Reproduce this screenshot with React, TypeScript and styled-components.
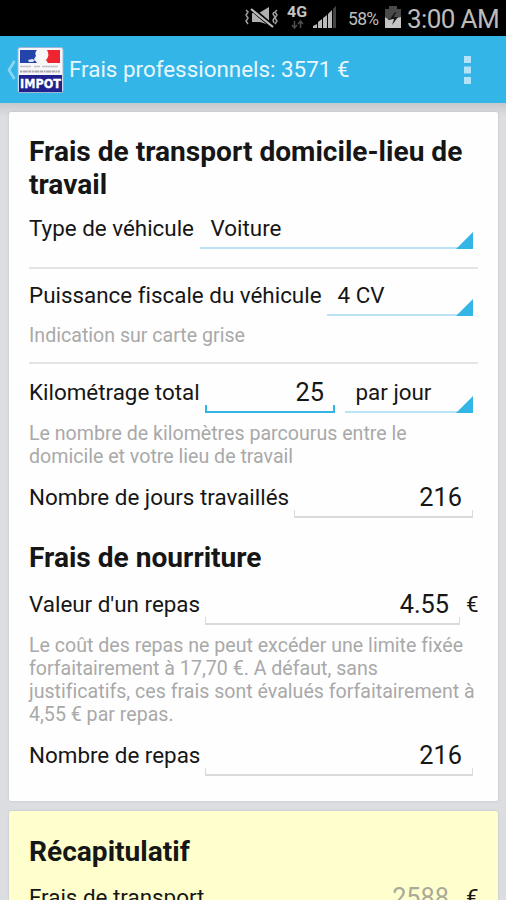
import React from "react";
import styled, { createGlobalStyle } from "styled-components";

const GlobalStyle = createGlobalStyle`
  * { box-sizing: border-box; }
  body { margin: 0; background: #dcdde1; overflow: hidden; }
`;

const Screen = styled.div`
  display: flex;
  flex-direction: column;
  width: 506px;
  height: 900px;
  overflow: hidden;
  background: #dcdde1;
  color: #161616;
  font-family: Roboto, "Liberation Sans", sans-serif;
  font-size: 22.4px;
  font-variant-ligatures: none;
  white-space: nowrap;
`;

const StatusBar = styled.header`
  display: flex;
  flex: none;
  height: 36px;
  justify-content: flex-end;
  background: #000;
  color: #bcbcbc;
`;

const StatusIcons = styled.svg`
  flex: none;
  width: 100px;
  height: 36px;
  margin-right: 8px;
`;

const Battery = styled.span`
  width: 35px;
  line-height: 38px;
  font-size: 17.5px;
  letter-spacing: -0.7px;
`;

const BatteryIcon = styled.svg`
  flex: none;
  width: 24px;
  height: 36px;
`;

const Clock = styled.span`
  width: 99px;
  line-height: 38px;
  font-size: 26px;
  letter-spacing: -0.6px;
`;

const ActionBar = styled.nav`
  display: flex;
  flex: none;
  align-items: center;
  height: 67px;
  padding: 0 32px 0 6px;
  background: #33b5e7;
  color: #e9f8fe;
`;

const BackIcon = styled.svg`
  width: 11px;
  height: 24px;
`;

const Logo = styled.svg`
  width: 47px;
  height: 48px;
  margin-right: 5px;
`;

const BarTitle = styled.h1`
  flex: 1;
  margin: -1px 0 0;
  font-size: 22.4px;
  font-weight: 400;
`;

const MenuIcon = styled.svg`
  width: 12px;
  height: 30px;
`;

const Content = styled.main`
  flex: 1;
  display: flex;
  flex-direction: column;
  gap: 10px;
  padding: 9px 8px 0 9px;
  background: linear-gradient(#c6c7ca, #d2d3d6 6px, #dcdde1 14px);
`;

const Card = styled.section<{ $tone?: string; $height: number }>`
  flex: none;
  height: ${(p) => p.$height}px;
  padding: 24px 20px 0;
  border-radius: 2px;
  background: ${(p) => p.$tone ?? "#fefefe"};
  box-shadow: 0 0 2px #b5b6ba;
`;

const Heading = styled.h2<{ $top?: number; $bottom: number }>`
  margin: ${(p) => p.$top ?? 0}px 0 ${(p) => p.$bottom}px;
  font-size: 28.1px;
  line-height: 33px;
  font-weight: 700;
`;

const Row = styled.div<{ $height?: number }>`
  display: flex;
  height: ${(p) => p.$height ?? 40}px;
  padding-right: 5px;
  line-height: 38px;
`;

const Label = styled.span<{ $width: number }>`
  flex: none;
  width: ${(p) => p.$width}px;
`;

const Spinner = styled.span<{ $height?: number }>`
  display: flex;
  flex: 1;
  justify-content: space-between;
  align-items: flex-start;
  height: ${(p) => p.$height ?? 39}px;
  padding-left: 10.5px;
  border-bottom: 2px solid #b9e2f5;
`;

const Corner = styled.svg`
  align-self: flex-end;
  width: 17px;
  height: 17px;
  margin-bottom: -2px;
`;

const Value = styled.span<{ $active?: boolean; $width?: number; $muted?: boolean }>`
  position: relative;
  flex: ${(p) => (p.$width ? "none" : "1")};
  width: ${(p) => (p.$width ? `${p.$width}px` : "auto")};
  padding-right: 11px;
  text-align: right;
  font-size: 25.3px;
  line-height: 40px;
  color: ${(p) => (p.$muted ? "#a9a99b" : "inherit")};
  &::after {
    content: "";
    position: absolute;
    left: 0;
    right: 0;
    bottom: 0;
    height: 6px;
    border: solid ${(p) => (p.$active ? "#33b5e5" : "#dadada")};
    border-width: 0 ${(p) => (p.$active ? 2 : 1)}px 2px;
  }
`;

const FieldGap = styled.span`
  width: 10px;
`;

const Unit = styled.span`
  flex: none;
  width: 13px;
  margin: 0 -5px 0 5px;
  padding-left: 1px;
`;

const Note = styled.p<{ $top: number; $bottom: number }>`
  margin: ${(p) => p.$top}px 0 ${(p) => p.$bottom}px;
  font-size: 19.6px;
  line-height: 23px;
  color: #a9a9a9;
`;

const Divider = styled.hr<{ $top: number; $bottom: number }>`
  height: 2px;
  margin: ${(p) => p.$top}px 0 ${(p) => p.$bottom}px;
  border: 0;
  background: #e4e4e4;
`;

function Select({ text, height }: { text: string; height?: number }) {
  return (
    <Spinner $height={height}>
      <span>{text}</span>
      <Corner viewBox="0 0 17 17">
        <path d="M0 17L17 0V17Z" fill="#33b5e5" />
      </Corner>
    </Spinner>
  );
}

export default function App() {
  return (
    <Screen>
      <GlobalStyle />
      <StatusBar>
        <StatusIcons viewBox="240 0 100 36">
          <path
            d="M246 10l2 2-2 3 2 3-2 3 2 3M274 12l-1 2 2 3-2 3 1 3M277 10l-2 2 2 3-2 3 2 3-2 3"
            fill="none"
            stroke="#a0a0a0"
            strokeWidth="1.5"
          />
          <path d="M252 13h7l10-6v18l-9-3h-8z" fill="#b0b0b0" />
          <path d="M252 9l20 17" stroke="#000" strokeWidth="4.5" />
          <path d="M251 9l22 18" stroke="#bbb" strokeWidth="2.2" />
          <text x="287" y="17" fill="#c4c4c4" fontSize="14.5" fontWeight="700" textLength="20" lengthAdjust="spacingAndGlyphs">4G</text>
          <path d="M294.500 21v7m-2.500-3l2.500 3 2.500-3M300.500 28v-7m-2.500 3l2.500-3 2.500 3" fill="none" stroke="#4c4c4c" strokeWidth="1.500" />
          <path d="M313 28v-2l4-2v4zM318 28v-6l4-3v9zM323 28v-10l4-3v13zM328 28v-14l4-4v18z" fill="#b9b9b9" />
          <path d="M333 28V9l3-3v22z" fill="#444" />
        </StatusIcons>
        <Battery>58%</Battery>
        <BatteryIcon viewBox="380 0 24 36">
          <path d="M382 9h4V6h8v3h4v11l-16-1z" fill="#4a4a4a" />
          <path d="M382 17l4 3 12-3v11h-16z" fill="#c4c4c4" />
          <path d="M392 12l-5 7h4l-2 6 6-8h-4l2-5z" fill="#161616" />
        </BatteryIcon>
        <Clock>3:00 AM</Clock>
      </StatusBar>
      <ActionBar>
        <BackIcon viewBox="0 0 11 24">
          <path d="M8.500 3L3 12l5.500 9" fill="none" stroke="#8ed6f2" strokeWidth="2.600" />
        </BackIcon>
        <Logo viewBox="0 0 47 48">
          <rect x="1" y="1.500" width="45" height="45" rx="2" fill="#f7f7fa" stroke="#a2b7d4" />
          <path d="M3 4h17c-2 2-2 4-1 6l-2 3 3 4H3z" fill="#2344a8" />
          <path d="M30 4h13v13H31l-2-3c3-3 3-6 1-10z" fill="#ee2430" />
          <path d="M11 14l4-1 3 1-2 2h-4z" fill="#dce3f4" />
          <path d="M3 20.500h40" stroke="#c3c3c7" strokeWidth="1.500" strokeDasharray="11 3 6 2 16 2" />
          <path d="M3 25.500h40" stroke="#aaaab0" strokeWidth="2" strokeDasharray="2 .6 5 .6 3 .6" />
          <rect x="2" y="29" width="43" height="17" fill="#20218d" />
          <text x="3" y="42" fill="#fff" stroke="#fff" strokeWidth="0.3" fontSize="13" fontWeight="700" fontFamily="DejaVu Sans, sans-serif" textLength="41" lengthAdjust="spacingAndGlyphs">IMPOT</text>
        </Logo>
        <BarTitle>Frais professionnels: 3571 €</BarTitle>
        <MenuIcon viewBox="0 0 12 30">
          <path d="M2 1h7v7H2zM2 11.500h7v7H2zM2 22h7v7H2z" fill="#b4e3f7" />
        </MenuIcon>
      </ActionBar>
      <Content>
        <Card $height={689}>
          <Heading $top={-1} $bottom={8}>
            Frais de transport domicile-lieu de
            <br />
            travail
          </Heading>
          <Row $height={40}>
            <Label $width={171}>Type de véhicule</Label>
            <Select text="Voiture" height={40} />
          </Row>
          <Divider $top={18} $bottom={7} />
          <Row $height={40}>
            <Label $width={298}>Puissance fiscale du véhicule</Label>
            <Select text="4 CV" height={40} />
          </Row>
          <Note $top={8} $bottom={0}>Indication sur carte grise</Note>
          <Divider $top={15} $bottom={9} />
          <Row>
            <Label $width={176}>Kilométrage total</Label>
            <Value $active $width={130}>25</Value>
            <FieldGap />
            <Select text="par jour" height={40} />
          </Row>
          <Note $top={9} $bottom={10}>
            Le nombre de kilomètres parcourus entre le
            <br />
            domicile et votre lieu de travail
          </Note>
          <Row>
            <Label $width={265}>Nombre de jours travaillés</Label>
            <Value>216</Value>
          </Row>
          <Heading $top={23} $bottom={11}>Frais de nourriture</Heading>
          <Row>
            <Label $width={176}>Valeur d'un repas</Label>
            <Value>4.55</Value>
            <Unit>€</Unit>
          </Row>
          <Note $top={9} $bottom={10}>
            Le coût des repas ne peut excéder une limite fixée
            <br />
            forfaitairement à 17,70 €. A défaut, sans
            <br />
            justificatifs, ces frais sont évalués forfaitairement à
            <br />
            4,55 € par repas.
          </Note>
          <Row>
            <Label $width={176}>Nombre de repas</Label>
            <Value>216</Value>
          </Row>
        </Card>
        <Card $height={140} $tone="#feffcc">
          <Heading $bottom={10}>Récapitulatif</Heading>
          <Row>
            <Label $width={176}>Frais de transport</Label>
            <Value $muted>2588</Value>
            <Unit>€</Unit>
          </Row>
        </Card>
      </Content>
    </Screen>
  );
}
